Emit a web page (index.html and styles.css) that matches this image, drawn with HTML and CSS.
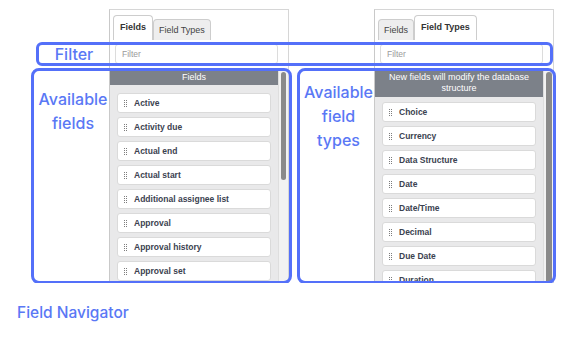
FILE: index.html
```html
<!DOCTYPE html>
<html>
<head>
    <title>Field Navigator</title>
    <link rel="stylesheet" href="styles.css">
</head>
<body>
    <div class="stage">
        <div class="panels">
            <!-- Fields panel -->
            <div class="panel">
                <div class="tabs">
                    <div class="tab active">Fields</div>
                    <div class="tab">Field Types</div>
                </div>
                <div class="filter">Filter</div>
                <div class="list-wrap">
                    <div class="list-main">
                        <div class="list-head">Fields</div>
                        <div class="list">
                            <div class="item"><span class="grip"></span>Active</div>
                            <div class="item"><span class="grip"></span>Activity due</div>
                            <div class="item"><span class="grip"></span>Actual end</div>
                            <div class="item"><span class="grip"></span>Actual start</div>
                            <div class="item"><span class="grip"></span>Additional assignee list</div>
                            <div class="item"><span class="grip"></span>Approval</div>
                            <div class="item"><span class="grip"></span>Approval history</div>
                            <div class="item"><span class="grip"></span>Approval set</div>
                        </div>
                    </div>
                    <div class="scroll"><div class="thumb short"></div></div>
                </div>
            </div>

            <!-- Field types panel -->
            <div class="panel second">
                <div class="tabs">
                    <div class="tab">Fields</div>
                    <div class="tab active">Field Types</div>
                </div>
                <div class="filter">Filter</div>
                <div class="list-wrap">
                    <div class="list-main">
                        <div class="list-head tall">New fields will modify the database structure</div>
                        <div class="list tight">
                            <div class="item"><span class="grip"></span>Choice</div>
                            <div class="item"><span class="grip"></span>Currency</div>
                            <div class="item"><span class="grip"></span>Data Structure</div>
                            <div class="item"><span class="grip"></span>Date</div>
                            <div class="item"><span class="grip"></span>Date/Time</div>
                            <div class="item"><span class="grip"></span>Decimal</div>
                            <div class="item"><span class="grip"></span>Due Date</div>
                            <div class="item"><span class="grip"></span>Duration</div>
                        </div>
                    </div>
                    <div class="scroll"><div class="thumb full"></div></div>
                </div>
            </div>
        </div>

        <!-- annotations drawn over the screenshot -->
        <div class="note note-filter"><span class="note-label">Filter</span></div>
        <div class="note note-fields"><div class="note-label">Available fields</div></div>
        <div class="note note-types"><div class="note-label">Available field types</div></div>
    </div>

    <p class="caption">Field Navigator</p>
</body>
</html>
```

FILE: styles.css
```css
:root {
    --note-blue: #5470f9;
    --note-text: #5a78f5;
}

body {
    margin: 0;
    background: #fff;
    font-family: "Liberation Sans", Arial, sans-serif;
    color: #3d4452;
    width: 587px;
    height: 344px;
    overflow: hidden;
}

.stage { position: relative; height: 283px; overflow: hidden; }

.panels { display: flex; gap: 85px; padding: 9px 0 0 109px; }

.panel {
    width: 178px;
    height: 290px;
    border-left: 1px solid #c9c9c9;
    border-right: 1px solid #d6d6d6;
    border-top: 1px solid #d6d6d6;
    background: #fff;
}

.tabs { display: flex; align-items: flex-end; height: 30px; padding-left: 3px; }
.tab {
    height: 20px;
    line-height: 20px;
    padding: 0 5px;
    font-size: 9px;
    background: #eeeeee;
    border: 1px solid #cdcdcd;
    border-bottom: none;
    border-radius: 4px 4px 0 0;
    color: #444;
}
.tab.active { height: 24px; line-height: 22px; padding: 0 6px; background: #fff; font-weight: bold; color: #333; }

.filter {
    margin: 4px 0 0 5px;
    width: 155px;
    height: 18px;
    line-height: 18px;
    padding-left: 6px;
    border: 1px solid #dcdcdc;
    border-radius: 3px;
    font-size: 8.5px;
    color: #9a9a9a;
}

.list-wrap { display: flex; margin-top: 6px; }
.list-main { width: 168px; background: #e9e9ea; }

.list-head {
    height: 15px;
    line-height: 15px;
    background: #7c8189;
    color: #fff;
    font-size: 9px;
    text-align: center;
}
.list-head.tall { height: 27px; line-height: 11px; padding: 2px 4px 0; box-sizing: border-box; }

.list { display: flex; flex-direction: column; gap: 4px; padding: 8px 7px 0; height: 220px; }
.list.tight { padding-top: 5px; }

.item {
    flex-shrink: 0;
    display: flex;
    align-items: center;
    height: 18px;
    background: #fff;
    border: 1px solid #dadada;
    border-radius: 3px;
    font-size: 8.5px;
    font-weight: bold;
    color: #3b4250;
}

.grip {
    width: 3px;
    height: 9px;
    margin: 0 7px 0 6px;
    background-image: linear-gradient(#fff 1px, transparent 1px), linear-gradient(90deg, #7d7d7d 1px, transparent 1px);
    background-size: 2px 2px;
}

.scroll { width: 10px; background: #f2f2f2; border-left: 1px solid #dedede; box-sizing: border-box; }
.thumb { width: 5px; margin: 2px 0 0 2px; background: #8a8a8a; border-radius: 3px; }
.thumb.short { height: 108px; }
.thumb.full { height: 240px; width: 6px; }

/* blue annotation outlines */
.note {
    position: absolute;
    border: 3px solid var(--note-blue);
    border-radius: 7px;
    box-sizing: border-box;
    font-family: Inter, "Liberation Sans", sans-serif;
    font-weight: 500;
    color: var(--note-text);
    font-size: 16px;
    line-height: 24px;
}
.note-filter { left: 36px; top: 42px; width: 517px; height: 24px; border-radius: 6px; }
.note-filter .note-label { display: block; width: 70px; text-align: center; line-height: 18px; }
.note-fields { left: 31px; top: 68px; width: 261px; height: 216px; border-radius: 8px; }
.note-fields .note-label { width: 78px; text-align: center; padding-top: 16px; }
.note-types { left: 297px; top: 68px; width: 259px; height: 216px; border-radius: 8px; }
.note-types .note-label { width: 77px; text-align: center; padding-top: 9px; }

.caption {
    margin: 21px 0 0 17px;
    font-family: Inter, "Liberation Sans", sans-serif;
    font-size: 15.5px;
    line-height: 18px;
    font-weight: 500;
    color: var(--note-text);
}
```
